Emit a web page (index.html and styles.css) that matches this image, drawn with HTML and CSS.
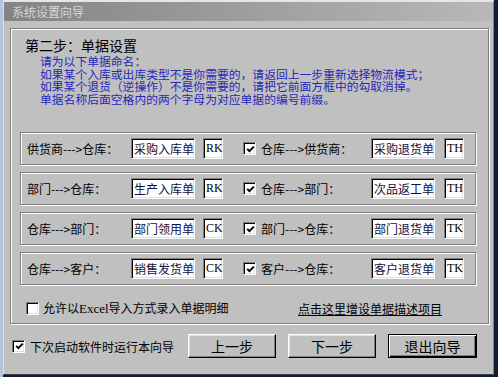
FILE: index.html
```html
<!DOCTYPE html>
<html lang="zh-CN">
<head>
<meta charset="utf-8">
<title>系统设置向导</title>
<link rel="stylesheet" href="styles.css">
</head>
<body>
<div class="window">
  <div class="titlebar">系统设置向导</div>
  <div class="client">
    <div class="group">
      <div class="step">第二步：单据设置</div>
      <div class="hint">
        <div>请为以下单据命名：</div>
        <div>如果某个入库或出库类型不是你需要的，请返回上一步重新选择物流模式；</div>
        <div>如果某个退货（逆操作）不是你需要的，请把它前面方框中的勾取消掉。</div>
        <div>单据名称后面空格内的两个字母为对应单据的编号前缀。</div>
      </div>
      <div class="rows">
        <div class="row">
          <span class="lbl">供货商---&gt;仓库：</span>
          <span class="field name">采购入库单</span>
          <span class="field code">RK</span>
          <span class="cb"><svg width="9" height="9" viewBox="0 0 9 9"><polyline points="1.2,3.8 3.4,6.2 7.8,1.6" fill="none" stroke="#000" stroke-width="1.9"/></svg></span>
          <span class="lbl2">仓库---&gt;供货商：</span>
          <span class="field name">采购退货单</span>
          <span class="field code code2">TH</span>
        </div>
        <div class="row">
          <span class="lbl">部门---&gt;仓库：</span>
          <span class="field name">生产入库单</span>
          <span class="field code">RK</span>
          <span class="cb"><svg width="9" height="9" viewBox="0 0 9 9"><polyline points="1.2,3.8 3.4,6.2 7.8,1.6" fill="none" stroke="#000" stroke-width="1.9"/></svg></span>
          <span class="lbl2">仓库---&gt;部门：</span>
          <span class="field name">次品返工单</span>
          <span class="field code code2">TH</span>
        </div>
        <div class="row">
          <span class="lbl">仓库---&gt;部门：</span>
          <span class="field name">部门领用单</span>
          <span class="field code">CK</span>
          <span class="cb"><svg width="9" height="9" viewBox="0 0 9 9"><polyline points="1.2,3.8 3.4,6.2 7.8,1.6" fill="none" stroke="#000" stroke-width="1.9"/></svg></span>
          <span class="lbl2">部门---&gt;仓库：</span>
          <span class="field name">部门退货单</span>
          <span class="field code code2">TK</span>
        </div>
        <div class="row">
          <span class="lbl">仓库---&gt;客户：</span>
          <span class="field name">销售发货单</span>
          <span class="field code">CK</span>
          <span class="cb"><svg width="9" height="9" viewBox="0 0 9 9"><polyline points="1.2,3.8 3.4,6.2 7.8,1.6" fill="none" stroke="#000" stroke-width="1.9"/></svg></span>
          <span class="lbl2">客户---&gt;仓库：</span>
          <span class="field name">客户退货单</span>
          <span class="field code code2">TK</span>
        </div>
      </div>
      <div class="extra">
        <span class="cb"></span>
        <span class="extra-text">允许以<span class="latin">Excel</span>导入方式录入单据明细</span>
        <span class="link">点击这里增设单据描述项目</span>
      </div>
    </div>
    <div class="footer">
      <span class="cb"><svg width="9" height="9" viewBox="0 0 9 9"><polyline points="1.2,3.8 3.4,6.2 7.8,1.6" fill="none" stroke="#000" stroke-width="1.9"/></svg></span>
      <span class="footer-text">下次启动软件时运行本向导</span>
      <div class="buttons">
        <span class="btn">上一步</span>
        <span class="btn">下一步</span>
        <span class="btn default">退出向导</span>
      </div>
    </div>
  </div>
</div>
</body>
</html>
```
FILE: styles.css
```css
* { box-sizing: border-box; }
html, body { margin: 0; padding: 0; }
body {
  width: 498px;
  height: 377px;
  overflow: hidden;
  background: linear-gradient(to right, #b4c4dc 0, #b4c4dc 3px, #101c34 3px);
  font-family: "Noto Sans CJK SC", "Noto Sans", sans-serif;
  font-size: 12px;
  color: #000;
}
.window {
  margin-left: 3px;
  width: 491px;
  height: 375px;
  background: #c0c0c0;
  border-top: 2px solid #e6e6e6;
  border-left: 1px solid #e0e0e0;
  border-right: 1px solid #808080;
  border-bottom: 1px solid #404040;
  display: flex;
  flex-direction: column;
}
.titlebar {
  height: 19px;
  flex: none;
  background: linear-gradient(to right, #848484, #b8b8b8);
  color: #d6d6d6;
  font-size: 12px;
  line-height: 19px;
  padding-left: 8px;
}
.client {
  padding: 7px 4px 0 6px;
}
.group {
  width: 479px;
  border: 1px solid #808080;
  box-shadow: inset 1px 1px 0 #fff, 1px 1px 0 #fff;
  padding: 8px 0 7px 9px;
}
.step {
  font-size: 14px;
  line-height: 16px;
  height: 16px;
  padding-left: 5px;
}
.hint {
  margin-top: 2px;
  padding-left: 20px;
  color: #2626b8;
  font-size: 11.8px;
  line-height: 12.5px;
  white-space: nowrap;
}
.rows {
  margin-top: 27px;
  width: 456px;
  display: flex;
  flex-direction: column;
  gap: 7px;
}
.row {
  height: 33px;
  border: 1px solid #808080;
  box-shadow: inset 1px 1px 0 #fff, 1px 1px 0 #fff;
  display: flex;
  align-items: center;
  padding-left: 6px;
  white-space: nowrap;
}
.lbl { width: 104px; }
.lbl2 { width: 110px; margin-left: 5px; }
.field {
  display: inline-block;
  height: 21px;
  background: #fff;
  border-top: 1px solid #808080;
  border-left: 1px solid #808080;
  border-right: 1px solid #fff;
  border-bottom: 1px solid #fff;
  box-shadow: inset 1px 1px 0 #000, inset -1px -1px 0 #dfdfdf;
  line-height: 19px;
  padding-left: 2px;
  overflow: hidden;
}
.name {
  width: 64px;
  color: #101040;
  font-size: 12px;
}
.code {
  width: 20px;
  margin-left: 8px;
  font-family: "Liberation Serif", serif;
  font-size: 12px;
  color: #000;
}
.code2 { margin-left: 9px; }
.row .cb { margin-left: 20px; }
.cb {
  display: inline-flex;
  align-items: center;
  justify-content: center;
  flex: none;
  width: 13px;
  height: 13px;
  background: #fff;
  border-top: 1px solid #808080;
  border-left: 1px solid #808080;
  border-right: 1px solid #fff;
  border-bottom: 1px solid #fff;
  box-shadow: inset 1px 1px 0 #000, inset -1px -1px 0 #dfdfdf;
}
.cb svg { display: block; margin: 1px 0 0 1px; }
.extra {
  margin-top: 15px;
  height: 16px;
  display: flex;
  align-items: center;
  padding-left: 6px;
  width: 456px;
  white-space: nowrap;
}
.extra-text { margin-left: 4px; }
.latin { font-family: "Liberation Serif", serif; font-size: 13px; }
.link {
  margin-left: auto;
  margin-right: 34px;
  text-decoration: underline;
}
.footer {
  margin-top: 10px;
  height: 24px;
  display: flex;
  align-items: center;
  padding-left: 2px;
  white-space: nowrap;
}
.footer-text { margin-left: 5px; }
.buttons {
  margin-left: auto;
  margin-right: 12px;
  display: flex;
  gap: 12px;
}
.btn {
  width: 88px;
  height: 24px;
  display: flex;
  align-items: center;
  justify-content: center;
  font-size: 14px;
  background: #c0c0c0;
  border-top: 1px solid #fff;
  border-left: 1px solid #fff;
  border-right: 1px solid #000;
  border-bottom: 1px solid #000;
  box-shadow: inset -1px -1px 0 #808080, inset 1px 1px 0 #dfdfdf;
}
.btn.default {
  width: 89px;
  border: 1px solid #000;
  box-shadow: inset 1px 1px 0 #fff, inset -1px -1px 0 #000, inset -2px -2px 0 #808080;
}
```
